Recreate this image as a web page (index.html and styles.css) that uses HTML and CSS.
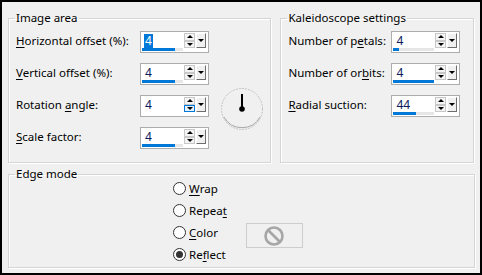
FILE: index.html
```html
<!DOCTYPE html>
<html lang="en">
<head>
    <meta charset="UTF-8">
    <title>Kaleidoscope</title>
    <link rel="stylesheet" href="styles.css">
</head>
<body>
    <div class="dialog">
        <div class="top">
            <fieldset class="group image-area">
                <legend>Image area</legend>
                <div class="image-body">
                    <div class="fields">
                        <div class="row">
                            <label><u>H</u>orizontal offset (%):</label>
                            <div class="spin">
                                <div class="val"><span class="num sel">4</span><div class="track"><div class="fill" style="width:80%"></div></div></div>
                                <div class="arrows"><span class="up"></span><span class="down"></span></div>
                                <span class="drop"></span>
                            </div>
                        </div>
                        <div class="row">
                            <label><u>V</u>ertical offset (%):</label>
                            <div class="spin">
                                <div class="val"><span class="num">4</span><div class="track"><div class="fill" style="width:80%"></div></div></div>
                                <div class="arrows"><span class="up"></span><span class="down"></span></div>
                                <span class="drop"></span>
                            </div>
                        </div>
                        <div class="row">
                            <label>Rotation <u>a</u>ngle:</label>
                            <div class="spin">
                                <div class="val"><span class="num">4</span><div class="track empty"></div></div>
                                <div class="arrows"><span class="up"></span><span class="down hover"></span></div>
                                <span class="drop"></span>
                            </div>
                        </div>
                        <div class="row">
                            <label><u>S</u>cale factor:</label>
                            <div class="spin">
                                <div class="val"><span class="num">4</span><div class="track"><div class="fill" style="width:80%"></div></div></div>
                                <div class="arrows"><span class="up"></span><span class="down"></span></div>
                                <span class="drop"></span>
                            </div>
                        </div>
                    </div>
                    <div class="dial">
                        <svg width="44" height="44" viewBox="0 0 44 44">
                            <circle cx="22" cy="22" r="20.5" fill="none" stroke="#c4c4c4" stroke-width="1" stroke-dasharray="2 1"/>
                            <path d="M4 30 A20.5 20.5 0 0 0 40 30" fill="none" stroke="#a8a8a8" stroke-width="1"/>
                            <line x1="22" y1="22" x2="22" y2="7" stroke="#000" stroke-width="2"/>
                            <circle cx="22" cy="22" r="2.8" fill="#000"/>
                        </svg>
                    </div>
                </div>
            </fieldset>
            <fieldset class="group kaleido">
                <legend>Kaleidoscope settings</legend>
                <div class="fields">
                    <div class="row">
                        <label>Number of p<u>e</u>tals:</label>
                        <div class="spin">
                            <div class="val"><span class="num">4</span><div class="track"><div class="fill" style="width:14%"></div></div></div>
                            <div class="arrows"><span class="up"></span><span class="down"></span></div>
                            <span class="drop"></span>
                        </div>
                    </div>
                    <div class="row">
                        <label>Number of or<u>b</u>its:</label>
                        <div class="spin">
                            <div class="val"><span class="num">4</span><div class="track"><div class="fill" style="width:100%"></div></div></div>
                            <div class="arrows"><span class="up"></span><span class="down"></span></div>
                            <span class="drop"></span>
                        </div>
                    </div>
                    <div class="row">
                        <label><u>R</u>adial suction:</label>
                        <div class="spin">
                            <div class="val"><span class="num">44</span><div class="track"><div class="fill" style="width:56%"></div></div></div>
                            <div class="arrows"><span class="up"></span><span class="down"></span></div>
                            <span class="drop"></span>
                        </div>
                    </div>
                </div>
            </fieldset>
        </div>
        <fieldset class="group edge">
            <legend>Edge mode</legend>
            <div class="edge-body">
                <div class="radios">
                    <div class="radio"><span class="dot"></span><u>W</u>rap</div>
                    <div class="radio"><span class="dot"></span>Repea<u>t</u></div>
                    <div class="radio"><span class="dot"></span><u>C</u>olor</div>
                    <div class="radio"><span class="dot checked"></span>Re<u>f</u>lect</div>
                </div>
                <div class="swatch">
                    <svg width="22" height="22" viewBox="0 0 22 22">
                        <circle cx="11" cy="11" r="8.5" fill="none" stroke="#a6a6a6" stroke-width="2.6"/>
                        <line x1="5" y1="5" x2="17" y2="17" stroke="#a6a6a6" stroke-width="2.6"/>
                    </svg>
                </div>
            </div>
        </fieldset>
    </div>
</body>
</html>
```

FILE: styles.css
```css
body {
    margin: 0;
    padding: 0;
    font-family: "Noto Sans", "DejaVu Sans", sans-serif;
    font-size: 11.5px;
    color: #000;
}

.dialog {
    box-sizing: border-box;
    width: 482px;
    height: 275px;
    border: 2px solid #000;
    background-color: #f0f0f0;
    padding: 8px 6px 0 6px;
}

.top {
    display: flex;
    gap: 9px;
}

.group {
    margin: 0;
    border: 1px solid #d5d5d5;
    box-shadow: 1px 1px 0 #fff, inset 1px 1px 0 #fff;
    padding: 0 7px;
    min-width: 0;
}

.group legend {
    padding: 0 1px;
    margin-left: -1px;
    line-height: 16px;
}

.image-area {
    box-sizing: border-box;
    width: 264px;
    height: 153px;
}

.kaleido {
    box-sizing: border-box;
    width: 194px;
    height: 153px;
}

.image-body {
    display: flex;
    align-items: flex-start;
}

.fields {
    display: flex;
    flex-direction: column;
    gap: 10px;
    padding-top: 5px;
}

.row {
    display: flex;
    align-items: center;
    height: 22px;
}

.row label {
    width: 124px;
    margin-top: -3px;
}

.kaleido .row label {
    width: 103px;
}

u {
    text-decoration-thickness: 1px;
    text-underline-offset: 2px;
}

.spin {
    box-sizing: border-box;
    display: flex;
    width: 69px;
    height: 22px;
    border: 1px solid #adadad;
    background: #fff;
    padding: 1px 2px 1px 1px;
}

.val {
    flex: 1;
    display: flex;
    flex-direction: column;
    justify-content: space-between;
}

.num {
    align-self: flex-start;
    margin-left: 2px;
    padding: 0 1px;
    line-height: 14px;
    margin-top: 1px;
    color: #0a1a5c;
    font-size: 12px;
}

.num.sel {
    background: #0078d7;
    color: #fff;
}

.track {
    height: 3px;
    background: #e6e6e6;
    margin-right: 1px;
}

.track.empty {
    background: transparent;
}

.fill {
    height: 3px;
    background: #0078d7;
}

.arrows {
    display: flex;
    flex-direction: column;
    width: 11px;
    height: 15px;
}

.arrows span {
    box-sizing: border-box;
    flex: 1;
    border: 1px solid #c8c8c8;
    background: #f4f4f4;
    display: flex;
    align-items: center;
    justify-content: center;
}

.arrows span.hover {
    border-color: #0078d7;
    background: #e5f1fb;
}

.arrows span::after {
    content: "";
    border-left: 3px solid transparent;
    border-right: 3px solid transparent;
}

.arrows .up::after {
    border-bottom: 3px solid #000;
}

.arrows .down::after {
    border-top: 3px solid #000;
}

.drop {
    box-sizing: border-box;
    width: 10px;
    height: 15px;
    margin-left: 1px;
    background: #f0f0f0;
    border-top: 1px solid #fff;
    border-left: 1px solid #fff;
    border-right: 1px solid #6d6d6d;
    border-bottom: 1px solid #6d6d6d;
    display: flex;
    align-items: center;
    justify-content: center;
}

.drop::after {
    content: "";
    border-left: 3px solid transparent;
    border-right: 3px solid transparent;
    border-top: 3px solid #000;
}

.dial {
    margin-left: 11px;
    margin-top: 61px;
    width: 44px;
    height: 44px;
}

.edge {
    box-sizing: border-box;
    width: 467px;
    height: 102px;
    margin-top: 3px;
}

.edge-body {
    display: flex;
    padding-left: 157px;
    margin-top: -5px;
}

.radio {
    display: flex;
    align-items: center;
    height: 22px;
}

.dot {
    box-sizing: border-box;
    width: 13px;
    height: 13px;
    border: 1px solid #333;
    border-radius: 50%;
    background: #fff;
    margin-right: 3px;
    display: flex;
    align-items: center;
    justify-content: center;
}

.dot.checked::after {
    content: "";
    width: 7px;
    height: 7px;
    border-radius: 50%;
    background: #333;
}

.swatch {
    box-sizing: border-box;
    width: 57px;
    height: 25px;
    border: 1px solid #cdcdcd;
    margin-left: 19px;
    margin-top: 46px;
    display: flex;
    align-items: center;
    justify-content: center;
}
```
